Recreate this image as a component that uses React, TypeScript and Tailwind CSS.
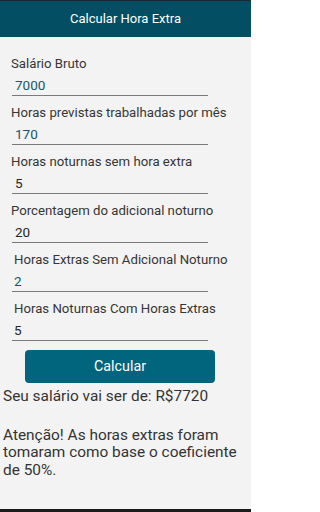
import React from "react"

interface FieldProps {
  label: string
  value: string
  indent?: boolean
  accent?: boolean
}

function Field({ label, value, indent, accent }: FieldProps) {
  return (
    <div className="mb-[9px]">
      <div className={`${indent ? "pl-[14px]" : "pl-[11px]"} text-[13.2px] leading-[16px] text-[#363636]`}>{label}</div>
      <div className="mt-[4px] ml-[12px] w-[196px] h-[20px] border-b border-[#7a7a7a]">
        <div
          className={`${indent ? "pl-[2px]" : "pl-[3px]"} text-[13.5px] leading-[18px] ${accent ? "text-[#17566d]" : "text-[#262626]"}`}
        >
          {value}
        </div>
      </div>
    </div>
  )
}

export default function App() {
  const fields: FieldProps[] = [
    { label: "Salário Bruto", value: "7000", accent: true },
    { label: "Horas previstas trabalhadas por mês", value: "170", accent: true },
    { label: "Horas noturnas sem hora extra", value: "5" },
    { label: "Porcentagem do adicional noturno", value: "20" },
    { label: "Horas Extras Sem Adicional Noturno", value: "2", indent: true, accent: true },
    { label: "Horas Noturnas Com Horas Extras", value: "5", indent: true },
  ]

  return (
    <div className="w-[251px] h-[512px] flex flex-col bg-[#f3f3f3] font-['Roboto',sans-serif] overflow-hidden">
      {/* Header */}
      <header className="h-[37px] shrink-0 border-t border-[#1b2a30] bg-[#034e63] flex items-center justify-center">
        <h1 className="text-[13px] text-white">Calcular Hora Extra</h1>
      </header>

      <main className="flex-1 pt-[19px]">
        {fields.map((f) => (
          <Field key={f.label} {...f} />
        ))}

        <div className="mt-[5px] flex pl-[25px]">
          <button className="w-[190px] h-[33px] rounded-[4px] bg-[#00657d] text-white text-[14.3px]">Calcular</button>
        </div>

        <div className="mt-[5px] px-[3px] text-[15.4px] leading-[17.5px] text-[#333333]">
          <p>Seu salário vai ser de: R$7720</p>
          <p className="mt-[21px]">
            Atenção! As horas extras foram tomaram como base o coeficiente de 50%.
          </p>
        </div>
      </main>

      <div className="h-[3px] shrink-0 bg-[#1a1a1a]" />
    </div>
  )
}
